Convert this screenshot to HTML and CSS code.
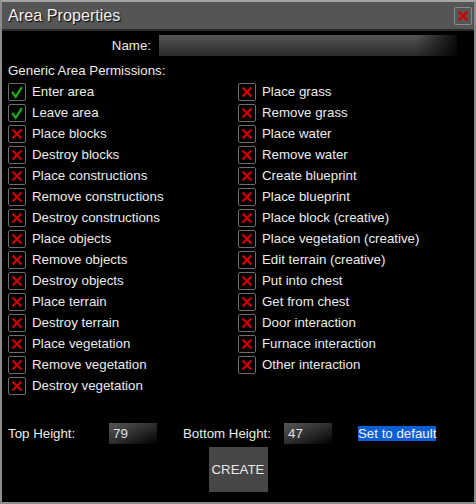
FILE: index.html
```html
<!DOCTYPE html>
<html>
<head>
<meta charset="utf-8">
<link rel="stylesheet" href="styles.css">
</head>
<body>
<svg class="defs" width="0" height="0">
  <symbol id="ix" viewBox="0 0 18 18"><path d="M4 4 L14 14 M14 4 L4 14" stroke="#d00000" stroke-width="2.6" fill="none"/></symbol>
  <symbol id="iv" viewBox="0 0 18 18"><path d="M3.5 9 L7.5 14.5 L14.5 3.5" stroke="#17b317" stroke-width="2.4" fill="none"/></symbol>
</svg>
<div class="window">
  <div class="titlebar">
    <span class="title">Area Properties</span>
    <span class="close"><svg width="16" height="16"><use href="#ix"/></svg></span>
  </div>
  <div class="content">
    <div class="name-row">
      <span class="name-label">Name:</span>
      <span class="field name-field"></span>
    </div>
    <div class="section">Generic Area Permissions:</div>
    <div class="perms">
      <div class="perm"><span class="cb"><svg width="16" height="16"><use href="#iv"/></svg></span><span class="pt">Enter area</span></div>
      <div class="perm"><span class="cb"><svg width="16" height="16"><use href="#iv"/></svg></span><span class="pt">Leave area</span></div>
      <div class="perm"><span class="cb"><svg width="16" height="16"><use href="#ix"/></svg></span><span class="pt">Place blocks</span></div>
      <div class="perm"><span class="cb"><svg width="16" height="16"><use href="#ix"/></svg></span><span class="pt">Destroy blocks</span></div>
      <div class="perm"><span class="cb"><svg width="16" height="16"><use href="#ix"/></svg></span><span class="pt">Place constructions</span></div>
      <div class="perm"><span class="cb"><svg width="16" height="16"><use href="#ix"/></svg></span><span class="pt">Remove constructions</span></div>
      <div class="perm"><span class="cb"><svg width="16" height="16"><use href="#ix"/></svg></span><span class="pt">Destroy constructions</span></div>
      <div class="perm"><span class="cb"><svg width="16" height="16"><use href="#ix"/></svg></span><span class="pt">Place objects</span></div>
      <div class="perm"><span class="cb"><svg width="16" height="16"><use href="#ix"/></svg></span><span class="pt">Remove objects</span></div>
      <div class="perm"><span class="cb"><svg width="16" height="16"><use href="#ix"/></svg></span><span class="pt">Destroy objects</span></div>
      <div class="perm"><span class="cb"><svg width="16" height="16"><use href="#ix"/></svg></span><span class="pt">Place terrain</span></div>
      <div class="perm"><span class="cb"><svg width="16" height="16"><use href="#ix"/></svg></span><span class="pt">Destroy terrain</span></div>
      <div class="perm"><span class="cb"><svg width="16" height="16"><use href="#ix"/></svg></span><span class="pt">Place vegetation</span></div>
      <div class="perm"><span class="cb"><svg width="16" height="16"><use href="#ix"/></svg></span><span class="pt">Remove vegetation</span></div>
      <div class="perm"><span class="cb"><svg width="16" height="16"><use href="#ix"/></svg></span><span class="pt">Destroy vegetation</span></div>
      <div class="perm"><span class="cb"><svg width="16" height="16"><use href="#ix"/></svg></span><span class="pt">Place grass</span></div>
      <div class="perm"><span class="cb"><svg width="16" height="16"><use href="#ix"/></svg></span><span class="pt">Remove grass</span></div>
      <div class="perm"><span class="cb"><svg width="16" height="16"><use href="#ix"/></svg></span><span class="pt">Place water</span></div>
      <div class="perm"><span class="cb"><svg width="16" height="16"><use href="#ix"/></svg></span><span class="pt">Remove water</span></div>
      <div class="perm"><span class="cb"><svg width="16" height="16"><use href="#ix"/></svg></span><span class="pt">Create blueprint</span></div>
      <div class="perm"><span class="cb"><svg width="16" height="16"><use href="#ix"/></svg></span><span class="pt">Place blueprint</span></div>
      <div class="perm"><span class="cb"><svg width="16" height="16"><use href="#ix"/></svg></span><span class="pt">Place block (creative)</span></div>
      <div class="perm"><span class="cb"><svg width="16" height="16"><use href="#ix"/></svg></span><span class="pt">Place vegetation (creative)</span></div>
      <div class="perm"><span class="cb"><svg width="16" height="16"><use href="#ix"/></svg></span><span class="pt">Edit terrain (creative)</span></div>
      <div class="perm"><span class="cb"><svg width="16" height="16"><use href="#ix"/></svg></span><span class="pt">Put into chest</span></div>
      <div class="perm"><span class="cb"><svg width="16" height="16"><use href="#ix"/></svg></span><span class="pt">Get from chest</span></div>
      <div class="perm"><span class="cb"><svg width="16" height="16"><use href="#ix"/></svg></span><span class="pt">Door interaction</span></div>
      <div class="perm"><span class="cb"><svg width="16" height="16"><use href="#ix"/></svg></span><span class="pt">Furnace interaction</span></div>
      <div class="perm"><span class="cb"><svg width="16" height="16"><use href="#ix"/></svg></span><span class="pt">Other interaction</span></div>
    </div>
    <div class="height-row">
      <span class="h-label">Top Height:</span>
      <span class="field num-field">79</span>
      <span class="h-label">Bottom Height:</span>
      <span class="field num-field">47</span>
      <span class="default-link">Set to default</span>
    </div>
    <div class="create">CREATE</div>
  </div>
</div>
</body>
</html>
```

FILE: styles.css
```css
html, body {
  margin: 0;
  padding: 0;
  background: #000;
}
body {
  font-family: "Liberation Sans", Arial, sans-serif;
  font-size: 13.3px;
  color: #ececec;
}
.defs {
  position: absolute;
  width: 0;
  height: 0;
}
.window {
  width: 476px;
  height: 504px;
  box-sizing: border-box;
  border: 2px solid #8c8c8c;
  border-top-color: #a4a4a4;
  background: #000;
  display: flex;
  flex-direction: column;
}
.titlebar {
  height: 27px;
  background: #555653;
  border-bottom: 2px solid #2a2a2a;
  display: flex;
  align-items: center;
  padding: 0 2px 0 6px;
  flex: none;
}
.title {
  font-size: 16.2px;
  color: #f0f0f0;
  text-shadow: 1px 1px 1px #000;
}
.close {
  margin-left: auto;
  width: 18px;
  height: 18px;
  box-sizing: border-box;
  border: 1px solid #8a8a8a;
  border-radius: 2px;
  display: flex;
  align-items: center;
  justify-content: center;
  margin-top: 1px;
}
.close svg, .cb svg {
  display: block;
}
.content {
  display: flex;
  flex-direction: column;
  padding: 4px 0 0 6px;
}
.name-row {
  display: flex;
  align-items: center;
  height: 21px;
}
.name-label {
  width: 143px;
  text-align: right;
  margin-right: 8px;
  padding-bottom: 1px;
}
.field {
  display: block;
  height: 21px;
  box-sizing: border-box;
}
.name-field {
  width: 298px;
  background:
    linear-gradient(to right, rgba(0,0,0,0) 86%, rgba(0,0,0,0.85) 100%),
    linear-gradient(to bottom, #555555 0%, #2a2a2a 100%);
}
.section {
  margin-top: 7px;
  line-height: 15px;
  margin-bottom: 1px;
}
.perms {
  margin-top: 4px;
  display: grid;
  grid-auto-flow: column;
  grid-template-rows: repeat(15, 18px);
  grid-template-columns: 230px 230px;
  row-gap: 3px;
}
.perm {
  display: flex;
  align-items: center;
  height: 18px;
  white-space: nowrap;
}
.pt {
  padding-bottom: 2px;
}
.cb {
  width: 18px;
  height: 18px;
  box-sizing: border-box;
  border: 1px solid #6c6c6c;
  border-radius: 2px;
  display: flex;
  align-items: center;
  justify-content: center;
  margin-right: 6px;
  flex: none;
}
.height-row {
  margin-top: 28px;
  display: flex;
  align-items: center;
  height: 21px;
}
.h-label {
  width: 101px;
  flex: none;
}
.num-field {
  width: 48px;
  margin-right: 26px;
  padding-left: 4px;
  line-height: 21px;
  color: #e0e0e0;
  background: linear-gradient(to bottom right, #575757 0%, #2a2a2a 55%, #000 100%);
}
.default-link {
  background: #0a5fd7;
  color: #f4f4f4;
  line-height: 15px;
  padding: 0;
}
.create {
  align-self: center;
  margin-top: 3px;
  margin-right: 6px;
  width: 59px;
  height: 45px;
  background: #464646;
  color: #e8e8e8;
  display: flex;
  align-items: center;
  justify-content: center;
}
```
